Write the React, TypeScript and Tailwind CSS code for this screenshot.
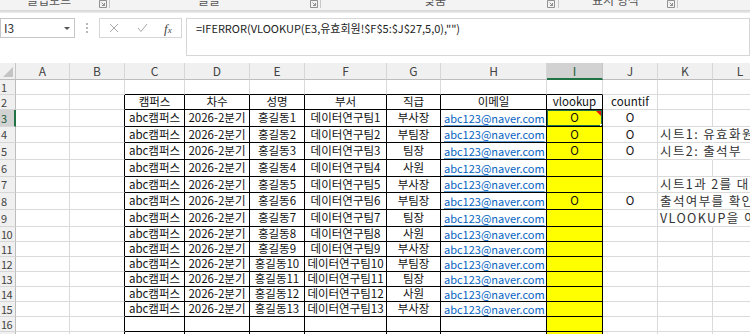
import React from "react";

const colNames = ["A", "B", "C", "D", "E", "F", "G", "H", "I", "J", "K", "L"];
const rowHeights = [15, 15, 17, 16, 17, 17, 16, 17, 17, 15, 15, 15, 15, 15, 15, 15, 15];
const positions = ["부사장", "부팀장", "팀장", "사원"];
const checked = [3, 4, 5, 8];

const notes: Record<number, string> = {
  4: "시트1: 유효화원 명단",
  5: "시트2: 출석부",
  7: "시트1과 2를 대조하여",
  8: "출석여부를 확인하는 방법",
  9: "VLOOKUP을 이용한 방법",
};

const headers = ["캠퍼스", "차수", "성명", "부서", "직급", "이메일", "vlookup", "countif"];

function cellText(r: number, c: number): string {
  if (r === 2 && c >= 2 && c <= 9) return headers[c - 2];
  if (r >= 3 && r <= 15) {
    const n = r - 2;
    if (c === 2) return "abc캠퍼스";
    if (c === 3) return "2026-2분기";
    if (c === 4) return `홍길동${n}`;
    if (c === 5) return `데이터연구팀${n}`;
    if (c === 6) return positions[(n - 1) % 4];
    if (c === 7) return "abc123@naver.com";
    if ((c === 8 || c === 9) && checked.includes(r)) return "O";
  }
  if (c === 10 && notes[r]) return notes[r];
  return "";
}

function inTable(r: number, c: number) {
  return r >= 2 && r <= 17 && c >= 2 && c <= 8;
}

function Cell({ r, c }: { r: number; c: number }) {
  const text = cellText(r, c);
  const blackRight = inTable(r, c) || (c === 1 && r >= 2 && r <= 17);
  const blackBottom = inTable(r, c) || (r === 1 && c >= 2 && c <= 8);
  const noRight = c === 10 && !!notes[r];
  const yellow = c === 8 && r >= 3;
  const selected = r === 3 && c === 8;
  const isEmail = c === 7 && r >= 3;

  const right = noRight ? "border-r-transparent" : blackRight ? "border-r-black" : "border-r-[#dadada]";
  const bottom = blackBottom ? "border-b-black" : "border-b-[#dadada]";
  let align = "justify-center";
  if (isEmail) align = "justify-start pl-[3px]";
  if (c === 10) align = "justify-start pl-[2px]";

  return (
    <div
      className={`relative flex items-center border-r border-b ${right} ${bottom} ${yellow ? "bg-[#ffff00]" : ""} ${align} ${c === 10 ? "overflow-visible z-10" : "overflow-hidden"}`}
    >
      {isEmail ? (
        <span className="whitespace-nowrap text-[11px] text-[#0563c1] underline decoration-[#5b9bd5] underline-offset-[2px]">{text}</span>
      ) : c === 10 ? (
        <span className="whitespace-nowrap text-[12.5px] tracking-[1.4px] text-[#333]">{text}</span>
      ) : (
        <span className="whitespace-nowrap text-[#111]">{text}</span>
      )}
      {selected && (
        <>
          <div className="pointer-events-none absolute -left-[1px] -top-[1px] -right-[1px] -bottom-[1px] border-2 border-[#217346]" />
          <div className="absolute right-[1px] top-[1px] h-0 w-0 border-l-[5px] border-t-[5px] border-l-transparent border-t-[#e8140f]" />
          <div className="absolute -bottom-[3px] -right-[3px] h-[5px] w-[5px] border border-white bg-[#217346]" />
        </>
      )}
    </div>
  );
}

function LauncherIcon() {
  return (
    <svg width="8" height="8" viewBox="0 0 8 8" className="text-[#777]">
      <path d="M0.5 0.5h7v7h-7z" fill="none" stroke="currentColor" strokeWidth="0.8" />
      <path d="M2.5 2.5l3 3M5.5 3v2.5H3" fill="none" stroke="currentColor" strokeWidth="0.8" />
    </svg>
  );
}

export default function App() {
  return (
    <div className="h-[334px] w-[750px] overflow-hidden bg-white font-['Noto_Sans_CJK_KR',sans-serif] text-[11.5px]">
      {/* ribbon group labels (cut off at top) */}
      <div className="relative h-[10px] overflow-hidden bg-[#f3f3f3] text-[12px] leading-none text-[#555]">
        <span className="absolute left-[27px] top-[-6px]">클립보드</span>
        <span className="absolute left-[99px] top-[0px]"><LauncherIcon /></span>
        <span className="absolute left-[109px] top-0 h-[8px] w-px bg-[#c8c8c8]" />
        <span className="absolute left-[198px] top-[-6px]">글꼴</span>
        <span className="absolute left-[310px] top-[0px]"><LauncherIcon /></span>
        <span className="absolute left-[320px] top-0 h-[8px] w-px bg-[#c8c8c8]" />
        <span className="absolute left-[424px] top-[-6px]">맞춤</span>
        <span className="absolute left-[547px] top-[0px]"><LauncherIcon /></span>
        <span className="absolute left-[558px] top-0 h-[8px] w-px bg-[#c8c8c8]" />
        <span className="absolute left-[592px] top-[-6px]">표시 형식</span>
        <span className="absolute left-[667px] top-[0px]"><LauncherIcon /></span>
        <span className="absolute left-[677px] top-0 h-[8px] w-px bg-[#c8c8c8]" />
      </div>
      <div className="h-[3px] bg-gradient-to-b from-[#d4d4d4] to-[#ececec]" />

      {/* formula bar */}
      <div className="flex h-[50px] items-start bg-white pt-[5px]">
        <div className="flex h-[20px] w-[75px] items-center justify-between border border-[#c6c6c6] bg-white pl-[3px] pr-[4px] text-[12px] text-[#333]">
          <span>I3</span>
          <span className="h-0 w-0 border-x-[3px] border-t-[3px] border-x-transparent border-t-[#555]" />
        </div>
        <div className="flex h-[20px] w-[24px] flex-col items-center justify-center gap-[2px]">
          <span className="h-[2px] w-[2px] bg-[#b8b8b8]" />
          <span className="h-[2px] w-[2px] bg-[#b8b8b8]" />
          <span className="h-[2px] w-[2px] bg-[#b8b8b8]" />
        </div>
        <div className="flex h-[20px] w-[83px] items-center border border-[#d6d6d6] bg-white">
          <svg width="10" height="10" viewBox="0 0 10 10" className="ml-[9px]">
            <path d="M1 1l8 8M9 1l-8 8" stroke="#a8a8a8" strokeWidth="1" />
          </svg>
          <svg width="11" height="10" viewBox="0 0 11 10" className="ml-[18px]">
            <path d="M1 5l3 3.5L10 1" fill="none" stroke="#a8a8a8" strokeWidth="1" />
          </svg>
          <span className="ml-[16px] font-['Liberation_Serif',serif] text-[13px] italic leading-none text-[#444]">
            f<span className="text-[9px]">x</span>
          </span>
        </div>
        <div className="ml-[4px] flex h-[38px] flex-1 items-start border border-[#d6d6d6] bg-white pl-[9px] pt-[1px] text-[11px] text-[#222]">
          =IFERROR(VLOOKUP(E3,유효회원!$F$5:$J$27,5,0),"")
        </div>
      </div>

      {/* sheet grid */}
      <div className="grid grid-cols-[16px_54px_55px_60px_65px_55px_82px_54px_106px_56px_55px_55px_55px] grid-rows-[17px_15px_15px_17px_16px_17px_17px_16px_17px_17px_15px_15px_15px_15px_15px_15px_15px_15px]">
        {/* corner */}
        <div className="relative border-r border-b border-r-[#c6c6c6] border-b-[#bdbdbd] bg-[#f0f0f0]">
          <div className="absolute bottom-[2px] right-[2px] h-0 w-0 border-b-[10px] border-l-[10px] border-l-transparent border-b-[#c4c4c4]" />
        </div>
        {colNames.map((n) =>
          n === "I" ? (
            <div
              key={n}
              className="flex items-center justify-center border-r border-b-2 border-r-[#c6c6c6] border-b-[#217346] bg-[#d2d2d2] text-[12px] text-[#1d5c39]"
            >
              {n}
            </div>
          ) : (
            <div
              key={n}
              className="flex items-center justify-center border-r border-b border-r-[#d6d6d6] border-b-[#bdbdbd] bg-[#f0f0f0] text-[12px] text-[#444]"
            >
              {n}
            </div>
          )
        )}
        {rowHeights.map((_, i) => {
          const r = i + 1;
          return (
            <React.Fragment key={r}>
              {r === 3 ? (
                <div className="flex items-center overflow-hidden border-b border-r-2 border-b-[#d6d6d6] border-r-[#217346] bg-[#d2d2d2] pl-px text-[11px] leading-none text-[#1d5c39]">
                  {r}
                </div>
              ) : (
                <div className="flex items-center overflow-hidden border-b border-r border-b-[#d6d6d6] border-r-[#bdbdbd] bg-[#f0f0f0] pl-px text-[11px] leading-none tracking-[-0.5px] text-[#444]">
                  {r}
                </div>
              )}
              {colNames.map((_, c) => (
                <Cell key={c} r={r} c={c} />
              ))}
            </React.Fragment>
          );
        })}
      </div>
    </div>
  );
}
